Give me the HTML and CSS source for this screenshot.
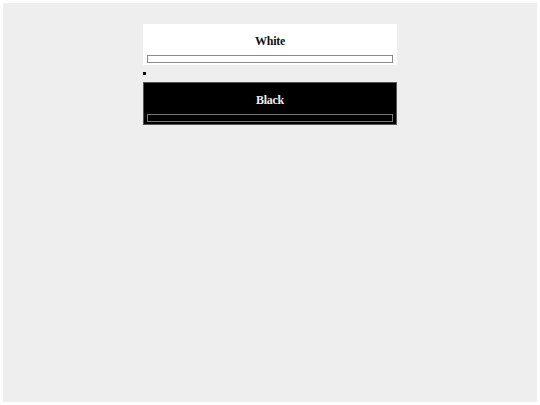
FILE: index.html
```html
<!DOCTYPE html>
<html>
<head>
<meta charset="utf-8">
<link rel="stylesheet" href="styles.css">
</head>
<body>
<div class="stage">
  <div class="panel panel-light">
    <h4 class="panel-title">White</h4>
    <div class="field"></div>
  </div>
  <div class="marker"></div>
  <div class="panel panel-dark">
    <h4 class="panel-title">Black</h4>
    <div class="field"></div>
  </div>
</div>
</body>
</html>
```
FILE: styles.css
```css
html {
  background: #ffffff;
}

body {
  margin: 3px;
  height: 399px;
  background: #eeeeee;
  font-family: "Liberation Serif", "Times New Roman", serif;
}

.stage {
  width: 254px;
  margin: 0 auto;
  padding-top: 21px;
  display: flex;
  flex-direction: column;
}

.panel {
  padding: 0 4px 3px;
}

.panel-light {
  background: #ffffff;
  height: 41px;
  box-sizing: border-box;
}

.panel-dark {
  background: #000000;
  border: 1px solid #555555;
  height: 43px;
  box-sizing: border-box;
  padding: 0 3px 2px;
}

.panel-title {
  margin: 0;
  height: 31px;
  line-height: 34px;
  text-align: center;
  font-size: 12px;
  font-weight: bold;
  letter-spacing: -0.3px;
}

.panel-light .panel-title {
  color: #111111;
}

.panel-dark .panel-title {
  color: #eeeeee;
}

.field {
  height: 8px;
  box-sizing: border-box;
  border: 1px solid #888888;
}

.panel-dark .field {
  border-color: #777777;
}

.marker {
  width: 3px;
  height: 3px;
  background: #000000;
  margin: 7px 0 7px;
}
```
